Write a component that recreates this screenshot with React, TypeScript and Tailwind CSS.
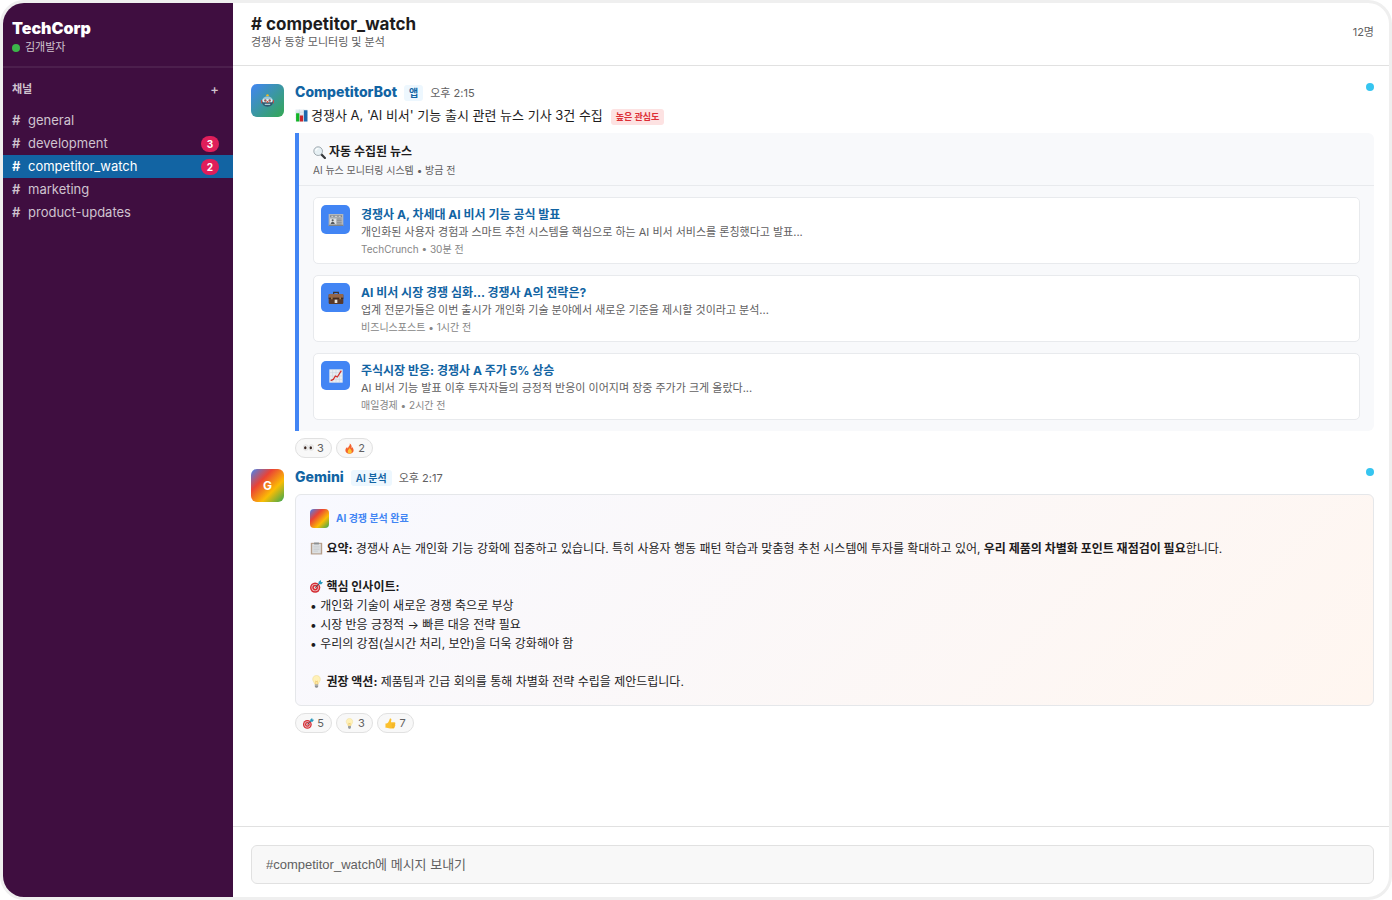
import { useState } from "react";
import type { ReactNode } from "react";

interface Channel {
  name: string;
  unread?: number;
}

interface NewsItem {
  icon: ReactNode;
  title: string;
  summary: string;
  source: string;
}

interface Reaction {
  icon: ReactNode;
  label: string;
  count: number;
}

/* ── Emoji drawings, all on a 24 x 24 grid ─────────────── */

function Glyph({ size = "w-[13px] h-[13px]", children }: { size?: string; children: ReactNode }) {
  return (
    <svg viewBox="0 0 24 24" aria-hidden className={`${size} flex-shrink-0 inline-block align-[-2px]`}>
      {children}
    </svg>
  );
}

function Robot() {
  return (
    <Glyph>
      <circle cx="12" cy="2.500" r="2.200" fill="#f5b921" />
      <path d="M0 11h4v6H0zM20 11h4v6h-4z" fill="#b9524c" />
      <path d="M2 13c0-5 4-8.500 10-8.500s10 3.500 10 8.500v2H2z" fill="#9cc9dc" />
      <path d="M2 14h20c0 6-3 9.500-10 9.500S2 20 2 14z" fill="#2f5a70" />
      <path d="M3.500 9.500h17v5.500h-17z" fill="#e3f1f5" />
      <circle cx="8" cy="12" r="2.200" fill="#8d5a58" />
      <circle cx="16" cy="12" r="2.200" fill="#8d5a58" />
      <path d="M11 13h2l1 3h-4z" fill="#d7503e" />
      <path d="M7 18h10v2.500H7z" fill="#a9c9d3" />
    </Glyph>
  );
}

function BarChart() {
  return (
    <Glyph>
      <path d="M1 1h22v22H1z" fill="#e4edf3" />
      <path d="M1 6h22M1 11h22M1 16h22M8 1v22M16 1v22" stroke="#bfd0db" strokeWidth=".8" />
      <path d="M2 8h6v15H2z" fill="#12b526" />
      <path d="M9 12h6v11H9z" fill="#c9252b" />
      <path d="M16.500 2.500H23V23h-6.500z" fill="#1c68ad" />
    </Glyph>
  );
}

function Magnifier() {
  return (
    <Glyph>
      <path d="m15 15 7 7" stroke="#35383b" strokeWidth="4" strokeLinecap="round" />
      <circle cx="9.500" cy="9.500" r="8" fill="#e6f0f4" stroke="#8d989e" strokeWidth="1.500" />
      <path d="M5 9a5 5 0 0 1 5-4.500" fill="none" stroke="#fff" strokeWidth="2" />
    </Glyph>
  );
}

function Newspaper() {
  return (
    <Glyph size="w-4 h-4">
      <path d="M1 3h22v18H1z" fill="#b5b8bb" />
      <path d="M1 19h22v2H1z" fill="#7f8489" />
      <path d="M3 5h18v3H3z" fill="#85898d" />
      <path d="M5 6.500h3M10 6.500h4M16 6.500h3" stroke="#eceeef" strokeWidth="1.200" />
      <path d="M3 10h9v8H3z" fill="#dfe1e3" />
      <circle cx="7" cy="12.500" r="1.600" fill="#53585c" />
      <path d="M4 18c0-4 6-4 6 0z" fill="#53585c" />
      <path d="M13.500 10.500h7M13.500 13h7M13.500 15.500h7M13.500 18h7" stroke="#74797e" strokeWidth="1" />
    </Glyph>
  );
}

function Briefcase() {
  return (
    <Glyph size="w-4 h-4">
      <path d="M8.500 7V3.500h7V7" fill="none" stroke="#3b3331" strokeWidth="1.800" />
      <rect x="1" y="6" width="22" height="15" rx="1.500" fill="#593a2b" />
      <path d="M1 7.500C1 6.500 2 6 3 6h18c1 0 2 .5 2 1.500V12H1z" fill="#94664a" />
      <path d="M1 11.500h22V13H1z" fill="#35221a" />
      <path d="M4.500 11h2.500v3H4.500zM17 11h2.500v3H17z" fill="#a57c43" />
      <path d="M10 14.500h4v5h-4z" fill="#e8e3dc" />
    </Glyph>
  );
}

function ChartUp() {
  return (
    <Glyph size="w-4 h-4">
      <path d="M2 2h20v20H2z" fill="#e9eef3" />
      <path d="M2 7h20M2 12h20M2 17h20M7 2v20M12 2v20M17 2v20" stroke="#c3ced8" strokeWidth=".7" />
      <path d="m4 19 4-2 3-5 3 1.500L20 4" fill="none" stroke="#d3312b" strokeWidth="1.900" strokeLinejoin="round" />
    </Glyph>
  );
}

function Eyes() {
  return (
    <Glyph>
      <ellipse cx="6" cy="10" rx="5.500" ry="6.500" fill="#eeeeee" stroke="#cfcfcf" strokeWidth=".8" />
      <ellipse cx="18" cy="10" rx="5.500" ry="6.500" fill="#eeeeee" stroke="#cfcfcf" strokeWidth=".8" />
      <ellipse cx="5" cy="10.500" rx="2.600" ry="3.400" fill="#38251f" />
      <ellipse cx="17" cy="10.500" rx="2.600" ry="3.400" fill="#38251f" />
    </Glyph>
  );
}

function Fire() {
  return (
    <Glyph>
      <path
        d="M12.500 1c1 4-1.500 5.500-3 8-.8 1.200-1 2-1 3-1-.8-1.500-2-1.500-3.500C4.500 10.500 3 13 3 16c0 4.500 4 7.500 9 7.500s9-3 9-7.500c0-3-1.500-5-2.500-7.500-.5 1.500-1 2.500-2 3C17.500 7 16 3 12.500 1z"
        fill="#f4602c"
      />
      <path d="M12.500 10c.5 3-4.500 4.500-4.500 9 0 2.500 2 4 4.500 4s4.500-1.500 4.500-4c0-4-3.500-5-4.500-9z" fill="#fdc334" />
    </Glyph>
  );
}

function Clipboard() {
  return (
    <Glyph>
      <path d="M1.500 1.500h21V23h-21z" fill="#b59d8a" />
      <path d="M4 3.500h16V21H4z" fill="#dde0e2" />
      <path d="M6.500 8h11M6.500 11h11M6.500 14h11M6.500 17h8" stroke="#bcc2c6" strokeWidth="1" />
      <path d="M7.500 1h9v3.500h-9z" fill="#8b8f92" />
    </Glyph>
  );
}

function Target() {
  return (
    <Glyph>
      <circle cx="9.500" cy="14" r="9.500" fill="#d42c33" />
      <circle cx="9.500" cy="14" r="6.800" fill="#efc6c8" />
      <circle cx="9.500" cy="14" r="5.200" fill="#d42c33" />
      <circle cx="9.500" cy="14" r="2.400" fill="#f3dcdd" />
      <path d="m9.500 14 9.500-9" stroke="#374b5c" strokeWidth="1.800" />
      <path d="m15.500 8 .5-5 4-3 .5 3.500L24 4l-3 4z" fill="#2898bb" />
    </Glyph>
  );
}

function Bulb() {
  return (
    <Glyph>
      <path
        d="M12 1C7.500 1 5 4 5 8c0 3.500 3 5.500 4 9.500h6c1-4 4-6 4-9.500 0-4-2.500-7-7-7z"
        fill="#fff1b8"
        stroke="#efd98f"
        strokeWidth="1"
      />
      <path d="M10.500 17V11l1.500 1 1.500-1v6" fill="none" stroke="#e8b84e" strokeWidth="1" />
      <path d="M9 17.500h6V21l-1.500 2.500h-3L9 21z" fill="#8c9093" />
      <path d="M9 19.500h6" stroke="#c5c8ca" strokeWidth="1" />
    </Glyph>
  );
}

function ThumbsUp() {
  return (
    <Glyph>
      <path
        d="M1 12c2.500 0 5-1 6.500-3.500C9 6 10 3.500 10.500 1.500c.3-1 3.500-1 3.500 2 0 2-1 4-1 6h7.500c2.500 0 3 3 1.300 4 1.400 1 1 3.300-.6 3.800 1 1.200.4 3-1 3.400.3 1.500-.7 2.300-2.200 2.300h-7C7 23 5 21.500 1 21.500z"
        fill="#fbc02d"
      />
      <path d="M15 13.500h6.500M15 17.300h6M15 20.700h5" stroke="#e39a1c" strokeWidth=".9" />
    </Glyph>
  );
}

/* ── Data ──────────────────────────────────────────────── */

const channels: Channel[] = [
  { name: "general" },
  { name: "development", unread: 3 },
  { name: "competitor_watch", unread: 2 },
  { name: "marketing" },
  { name: "product-updates" },
];

const news: NewsItem[] = [
  {
    icon: <Newspaper />,
    title: "경쟁사 A, 차세대 AI 비서 기능 공식 발표",
    summary: "개인화된 사용자 경험과 스마트 추천 시스템을 핵심으로 하는 AI 비서 서비스를 론칭했다고 발표...",
    source: "TechCrunch • 30분 전",
  },
  {
    icon: <Briefcase />,
    title: "AI 비서 시장 경쟁 심화... 경쟁사 A의 전략은?",
    summary: "업계 전문가들은 이번 출시가 개인화 기술 분야에서 새로운 기준을 제시할 것이라고 분석...",
    source: "비즈니스포스트 • 1시간 전",
  },
  {
    icon: <ChartUp />,
    title: "주식시장 반응: 경쟁사 A 주가 5% 상승",
    summary: "AI 비서 기능 발표 이후 투자자들의 긍정적 반응이 이어지며 장중 주가가 크게 올랐다...",
    source: "매일경제 • 2시간 전",
  },
];

const botReactions: Reaction[] = [
  { icon: <Eyes />, label: "눈", count: 3 },
  { icon: <Fire />, label: "불", count: 2 },
];

const geminiReactions: Reaction[] = [
  { icon: <Target />, label: "과녁", count: 5 },
  { icon: <Bulb />, label: "전구", count: 3 },
  { icon: <ThumbsUp />, label: "좋아요", count: 7 },
];

const googleGradient = "bg-[linear-gradient(135deg,#4285f4_0%,#ea4335_33%,#fbbc04_66%,#34a853_100%)]";

/* ── Sidebar ───────────────────────────────────────────── */

function Sidebar({ active, onSelect }: { active: string; onSelect: (name: string) => void }) {
  return (
    <aside className="w-[230px] flex-shrink-0 bg-[#3f0e40] text-[#cfc3cf]">
      <div className="px-[9px] pt-4 pb-2 border-b-2 border-[#4c1f4d]">
        <h1 className="text-base leading-[18px] font-black text-white">TechCorp</h1>
        <div className="flex items-center gap-1 text-[11px] leading-[21px]">
          <span className="w-2 h-2 mr-px rounded-full bg-[#3cb54a]" />
          김개발자
        </div>
      </div>

      <div className="flex items-center justify-between pl-[9px] pr-[14px] pt-[11px] pb-[10px] leading-5">
        <h2 className="text-[11px] font-semibold">채널</h2>
        <button type="button" aria-label="채널 추가" className="text-[13px] font-medium">
          +
        </button>
      </div>

      <nav>
        {channels.map((c) => (
          <button
            key={c.name}
            type="button"
            onClick={() => onSelect(c.name)}
            className={`flex items-center w-full h-[23px] pl-[9px] pr-[14px] text-[13px] text-left ${
              c.name === active ? "bg-[#1264a3] text-white" : ""
            }`}
          >
            <span className="w-4 font-semibold">#</span>
            <span className="flex-1">{c.name}</span>
            {c.unread && (
              <span className="w-[18px] h-4 rounded-full bg-[#e01e5a] text-white text-[10px] leading-4 font-bold text-center">
                {c.unread}
              </span>
            )}
          </button>
        ))}
      </nav>
    </aside>
  );
}

/* ── Messages ──────────────────────────────────────────── */

interface MessageProps {
  avatar: ReactNode;
  avatarClass: string;
  author: string;
  tag: string;
  time: string;
  reactions: Reaction[];
  children: ReactNode;
}

function Message({ avatar, avatarClass, author, tag, time, reactions, children }: MessageProps) {
  return (
    <article className="flex gap-[11px]">
      <div
        className={`w-[33px] h-[33px] flex-shrink-0 rounded-md flex items-center justify-center text-white text-xs font-bold ${avatarClass}`}
      >
        {avatar}
      </div>
      <div className="flex-1 min-w-0">
        <header className="flex items-center h-4 text-[11px]">
          <span className="text-sm font-extrabold text-[#1264a3]">{author}</span>
          <span className="ml-[7px] mt-[2px] px-[5px] rounded-[3px] bg-[#edf7fe] text-[#1264a3] text-[10px] leading-4 font-semibold">
            {tag}
          </span>
          <time className="ml-[7px] mt-[2px] text-[#616061]">{time}</time>
          <span className="w-2 h-2 ml-auto mb-[10px] rounded-full bg-[#36c5f0]" />
        </header>
        {children}
        <div className="flex gap-1 mt-[7px]">
          {reactions.map((r) => (
            <button
              key={r.label}
              type="button"
              aria-label={`${r.label} ${r.count}`}
              className="flex items-center justify-center gap-[3px] w-[37px] h-5 rounded-full border border-[#e1e1e1] bg-[#f8f8f8] text-[11px] text-[#616061] [&>svg]:w-[11px]"
            >
              {r.icon}
              {r.count}
            </button>
          ))}
        </div>
      </div>
    </article>
  );
}

function NewsCard({ item }: { item: NewsItem }) {
  return (
    <li className="flex gap-[11px] p-[7px] h-[67px] bg-white border border-[#e8eaed] rounded-[5px]">
      <div className="w-[29px] h-[29px] flex-shrink-0 rounded-[5px] bg-[#4285f4] flex items-center justify-center">
        {item.icon}
      </div>
      <div className="min-w-0">
        <a href="#news" className="block text-xs leading-5 font-bold text-[#1264a3]">
          {item.title}
        </a>
        <p className="text-[11px] leading-[14px] text-[#616061]">{item.summary}</p>
        <p className="text-[10px] leading-5 text-[#868686]">{item.source}</p>
      </div>
    </li>
  );
}

export default function App() {
  const [active, setActive] = useState("competitor_watch");
  const [draft, setDraft] = useState("");

  return (
    <div
      lang="ko"
      className="flex min-h-screen overflow-hidden rounded-3xl border-[3px] border-[#efefef] bg-white text-[#1d1c1d] font-['Inter','Noto_Sans_CJK_KR',sans-serif]"
    >
      <Sidebar active={active} onSelect={setActive} />

      <main className="flex flex-col flex-1 min-w-0">
        <header className="flex items-center justify-between pl-[18px] pr-[15px] pt-[11px] pb-[15px] border-b border-[#e1e1e1]">
          <div>
            <h2 className="text-[17px] leading-5 font-bold"># competitor_watch</h2>
            <p className="text-[11px] leading-4 text-[#616061]">경쟁사 동향 모니터링 및 분석</p>
          </div>
          <span className="text-[11px] text-[#616061]">12명</span>
        </header>

        <section className="flex flex-col flex-1 gap-[11px] pl-[18px] pr-[15px] py-[18px]">
          <Message
            avatar={<Robot />}
            avatarClass="bg-[linear-gradient(135deg,#4285f4,#34a853)]"
            author="CompetitorBot"
            tag="앱"
            time="오후 2:15"
            reactions={botReactions}
          >
            <p className="flex items-center pt-1 pb-[6px] text-[13px] leading-[23px]">
              <BarChart />
              <span className="ml-[3px]">경쟁사 A, 'AI 비서' 기능 출시 관련 뉴스 기사 3건 수집</span>
              <span className="ml-2 mt-[2px] px-[5px] rounded-[3px] bg-[#fde2e2] text-[#dc2f36] text-[9px] leading-4 font-bold">
                높은 관심도
              </span>
            </p>
            <div className="border-l-4 border-[#4285f4] rounded-r-md bg-[#f8f9fb]">
              <div className="px-[14px] pt-[9px] pb-[6px] border-b border-[#e8eaed]">
                <h3 className="flex items-center gap-[3px] text-xs leading-5 font-bold">
                  <Magnifier />
                  자동 수집된 뉴스
                </h3>
                <p className="text-[10px] leading-[17px] text-[#616061]">AI 뉴스 모니터링 시스템 • 방금 전</p>
              </div>
              <ul className="flex flex-col gap-[11px] px-[14px] py-[11px]">
                {news.map((item) => (
                  <NewsCard key={item.title} item={item} />
                ))}
              </ul>
            </div>
          </Message>

          <Message
            avatar="G"
            avatarClass={googleGradient}
            author="Gemini"
            tag="AI 분석"
            time="오후 2:17"
            reactions={geminiReactions}
          >
            <div className="mt-[9px] p-[14px] rounded-md border border-[#e5e7ea] bg-[linear-gradient(135deg,#f8f9ff,#fff6f0)]">
              <div className="flex items-center gap-[7px] mb-[11px] text-[10px] leading-[19px] font-bold text-[#4285f4]">
                <span className={`w-[19px] h-[19px] rounded-[4px] ${googleGradient}`} />
                AI 경쟁 분석 완료
              </div>
              <div className="text-xs leading-[19px]">
                <p>
                  <Clipboard /> <strong>요약:</strong> 경쟁사 A는 개인화 기능 강화에 집중하고 있습니다. 특히 사용자 행동
                  패턴 학습과 맞춤형 추천 시스템에 투자를 확대하고 있어, <strong>우리 제품의 차별화 포인트 재점검이 필요</strong>
                  합니다.
                </p>
                <p className="mt-[19px]">
                  <Target /> <strong>핵심 인사이트:</strong>
                </p>
                <p>• 개인화 기술이 새로운 경쟁 축으로 부상</p>
                <p>• 시장 반응 긍정적 → 빠른 대응 전략 필요</p>
                <p>• 우리의 강점(실시간 처리, 보안)을 더욱 강화해야 함</p>
                <p className="mt-[19px]">
                  <Bulb /> <strong>권장 액션:</strong> 제품팀과 긴급 회의를 통해 차별화 전략 수립을 제안드립니다.
                </p>
              </div>
            </div>
          </Message>
        </section>

        <footer className="pl-[18px] pr-[15px] pt-[18px] pb-[13px] border-t border-[#e1e1e1]">
          <input
            type="text"
            value={draft}
            onChange={(e) => setDraft(e.target.value)}
            aria-label="메시지 입력"
            placeholder="#competitor_watch에 메시지 보내기"
            className="block w-full h-[39px] px-[14px] rounded-md border border-[#e1e1e1] bg-[#f8f8f8] text-[13px] placeholder:text-[#616061] outline-none font-['Liberation_Sans','Noto_Sans_CJK_KR',sans-serif]"
          />
        </footer>
      </main>
    </div>
  );
}
